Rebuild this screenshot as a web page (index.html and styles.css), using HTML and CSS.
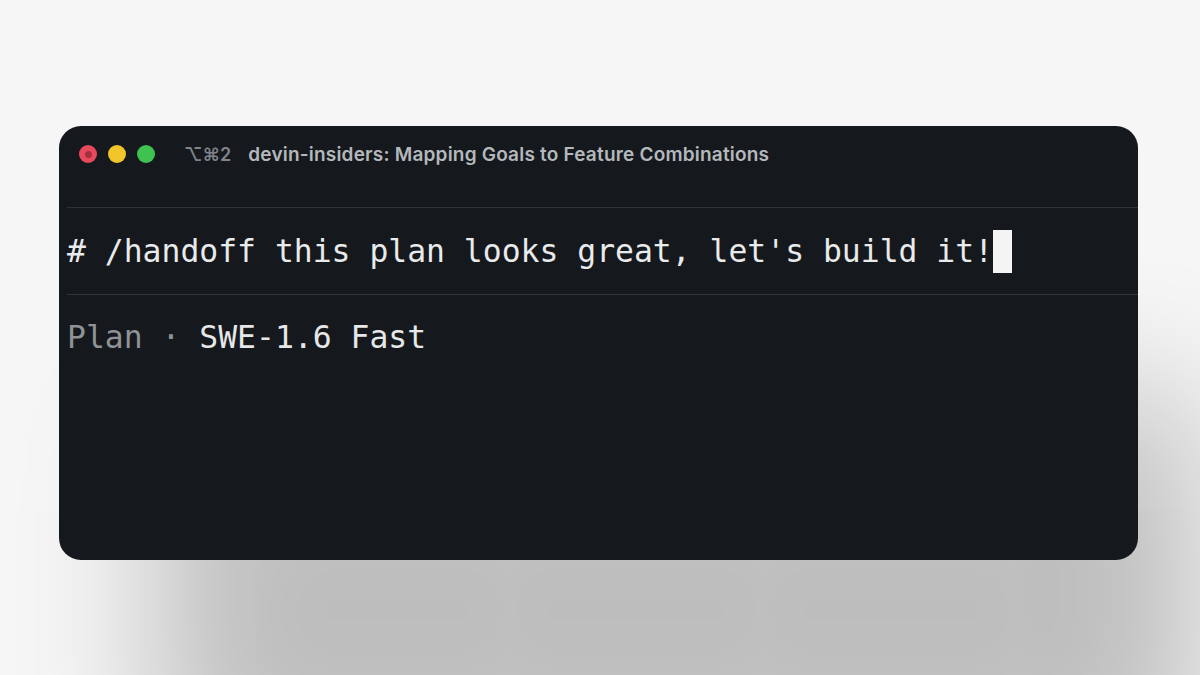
FILE: index.html
```html
<!DOCTYPE html>
<html lang="en">
<head>
<meta charset="utf-8">
<title>devin-insiders</title>
<link rel="stylesheet" href="styles.css">
</head>
<body>
<div class="stage">
  <div class="window">
    <div class="titlebar">
      <div class="lights">
        <span class="light red"><span class="dot"></span></span>
        <span class="light yellow"></span>
        <span class="light green"></span>
      </div>
      <span class="keys">⌥⌘2</span>
      <span class="title">devin-insiders: Mapping Goals to Feature Combinations</span>
    </div>
    <div class="content">
      <div class="rule"></div>
      <div class="prompt"><span class="ptext"># /handoff this plan looks great, let's build it!</span><span class="cursor"></span></div>
      <div class="rule"></div>
      <div class="status"><span class="mode">Plan · </span><span class="model">SWE-1.6 Fast</span></div>
    </div>
  </div>
</div>
</body>
</html>
```
FILE: styles.css
```css
html, body {
  margin: 0;
  padding: 0;
}
body {
  width: 1200px;
  height: 675px;
  overflow: hidden;
  background: #f6f6f6;
}
.stage {
  padding-top: 126px;
  padding-left: 59px;
}
.window {
  width: 1079px;
  height: 434px;
  border-radius: 22px;
  background: #15191d;
  box-shadow: 80px 250px 140px -20px rgba(0, 0, 0, 0.23);
  overflow: hidden;
}
.titlebar {
  height: 56px;
  display: flex;
  align-items: center;
  padding-left: 20px;
  font-family: "Inter", "Liberation Sans", Arial, sans-serif;
  font-size: 19px;
  font-weight: 600;
}
.lights {
  display: flex;
  gap: 11px;
}
.light {
  width: 18px;
  height: 18px;
  border-radius: 50%;
  display: flex;
  align-items: center;
  justify-content: center;
}
.red { background: #e8495c; }
.red .dot {
  width: 7px;
  height: 7px;
  border-radius: 50%;
  background: #a3303c;
}
.yellow { background: #f2c52a; }
.green { background: #3ec350; }
.keys {
  margin-left: 29px;
  color: #80848a;
  font-size: 18px;
}
.title {
  margin-left: 17px;
  color: #b4b8bc;
  letter-spacing: 0.2px;
}
.content {
  margin-top: 25px;
  padding-left: 8px;
  font-family: "DejaVu Sans Mono", "Liberation Mono", monospace;
  font-size: 31.4px;
}
.rule {
  height: 1px;
  background: #2f3439;
}
.prompt {
  height: 86px;
  display: flex;
  align-items: center;
  color: #e9eaeb;
}
.cursor {
  display: inline-block;
  width: 19px;
  height: 43px;
  background: #f4f4f4;
}
.status {
  padding-top: 22px;
  line-height: 40px;
}
.mode { color: #8f9296; }
.model { color: #e6e7e8; }
```
